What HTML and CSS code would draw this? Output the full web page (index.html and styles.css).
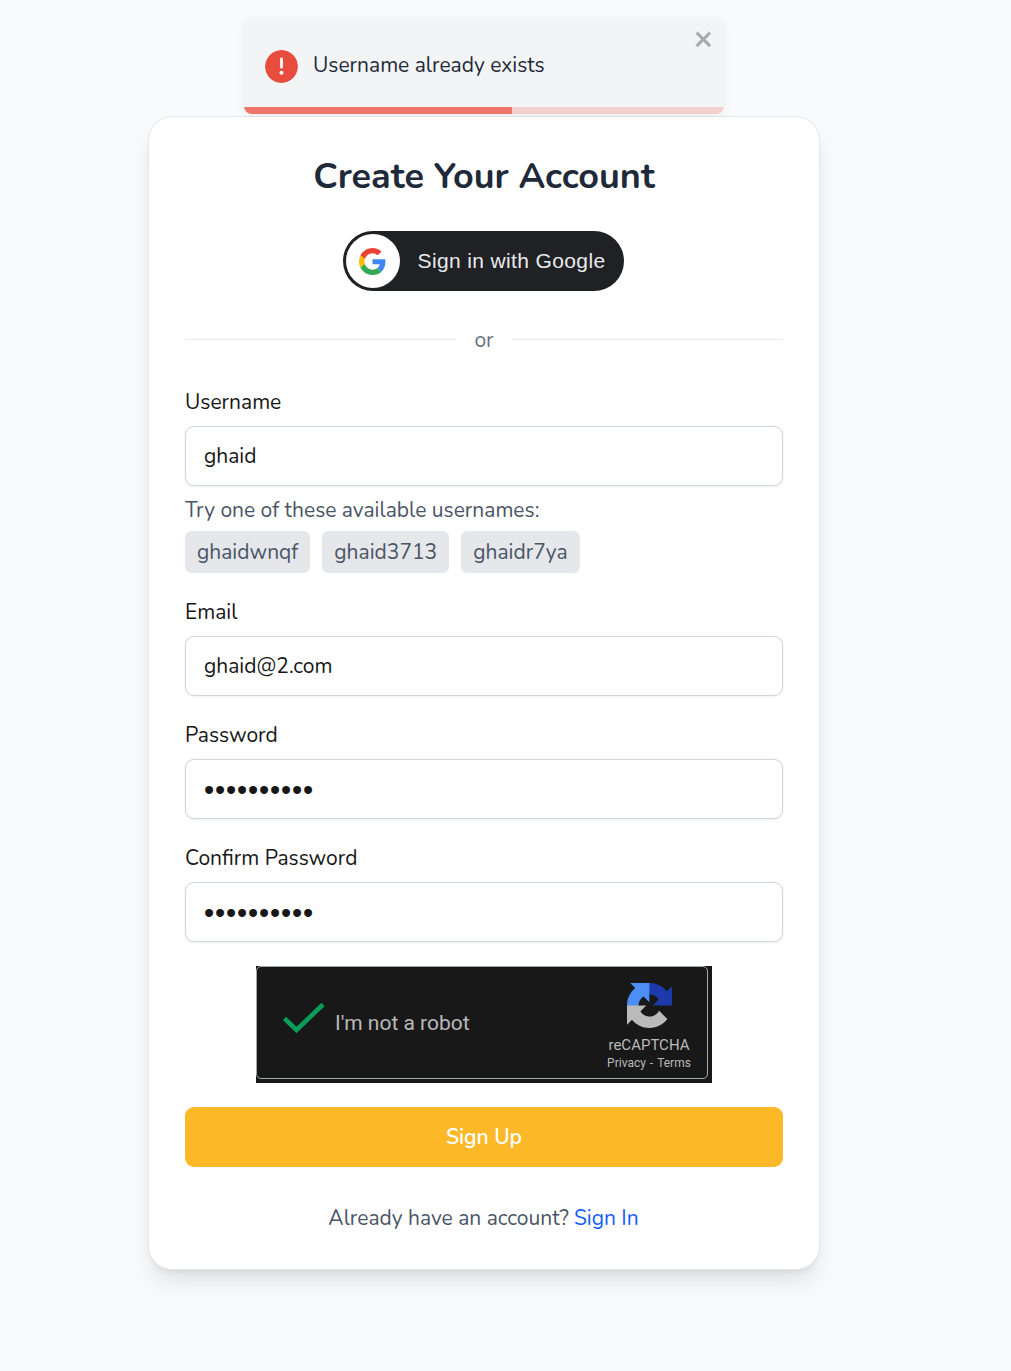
FILE: index.html
```html
<!DOCTYPE html>
<html lang="en">
<head>
<meta charset="utf-8">
<title>Create Your Account</title>
<link rel="stylesheet" href="styles.css">
</head>
<body>
<div class="toast" role="alert">
  <svg class="toast-icon" viewBox="0 0 24 24"><path fill="#e74c3c" d="M11.983 0a12.206 12.206 0 00-8.51 3.653A11.8 11.8 0 000 12.207 11.779 11.779 0 0011.8 24h.214A12.111 12.111 0 0024 11.791 11.766 11.766 0 0011.983 0zM10.5 16.542a1.476 1.476 0 011.449-1.53h.027a1.527 1.527 0 011.523 1.47 1.475 1.475 0 01-1.449 1.53h-.027a1.529 1.529 0 01-1.523-1.47zM11 12.5v-6a1 1 0 012 0v6a1 1 0 11-2 0z"/></svg>
  <span class="toast-text">Username already exists</span>
  <svg class="toast-close" viewBox="0 0 14 16"><path fill="currentColor" fill-rule="evenodd" d="M7.71 8.23l3.75 3.75-1.48 1.48-3.75-3.75-3.75 3.75L1 11.98l3.75-3.75L1 4.48 2.48 3l3.75 3.75L9.98 3l1.48 1.48-3.75 3.75z"/></svg>
  <div class="toast-track"><div class="toast-progress" style="width: 55.8%"></div></div>
</div>
<main class="page">
  <form class="card">
    <h1 class="title">Create Your Account</h1>
    <button type="button" class="google">
      <span class="google-badge">
        <svg class="google-logo" viewBox="0 0 48 48"><path fill="#EA4335" d="M24 9.5c3.54 0 6.71 1.22 9.21 3.6l6.85-6.85C35.9 2.38 30.47 0 24 0 14.62 0 6.51 5.38 2.56 13.22l7.98 6.19C12.43 13.72 17.74 9.5 24 9.5z"/><path fill="#4285F4" d="M46.98 24.55c0-1.57-.15-3.09-.38-4.55H24v9.02h12.94c-.58 2.96-2.26 5.48-4.78 7.18l7.73 6c4.51-4.18 7.09-10.36 7.09-17.65z"/><path fill="#FBBC05" d="M10.53 28.59c-.48-1.45-.76-2.99-.76-4.59s.27-3.14.76-4.59l-7.98-6.19C.92 16.46 0 20.12 0 24c0 3.88.92 7.54 2.56 10.78l7.97-6.19z"/><path fill="#34A853" d="M24 48c6.48 0 11.93-2.13 15.89-5.81l-7.73-6c-2.15 1.45-4.92 2.3-8.16 2.3-6.26 0-11.57-4.22-13.47-9.91l-7.98 6.19C6.51 42.62 14.62 48 24 48z"/></svg>
      </span>
      <span class="google-text">Sign in with Google</span>
    </button>
    <div class="divider"><span class="or">or</span></div>

    <div class="field">
      <label class="label" for="user">Username</label>
      <input class="input" id="user" value="ghaid">
      <p class="hint">Try one of these available usernames:</p>
      <div class="chips">
        <span class="chip">ghaidwnqf</span>
        <span class="chip">ghaid3713</span>
        <span class="chip">ghaidr7ya</span>
      </div>
    </div>
    <div class="field">
      <label class="label" for="email">Email</label>
      <input class="input" id="email" value="ghaid@2.com">
    </div>
    <div class="field">
      <label class="label" for="pass">Password</label>
      <input class="input secret" id="pass" type="password" value="abcdefghij">
    </div>
    <div class="field">
      <label class="label" for="confirm">Confirm Password</label>
      <input class="input secret" id="confirm" type="password" value="abcdefghij">
    </div>

    <div class="captcha">
      <div class="captcha-box">
        <svg class="tick" viewBox="0 0 42 32"><path d="M1.5 16.5 L13.5 28 L40 2.5" fill="none" stroke="#0a9d58" stroke-width="4.6"/></svg>
        <span class="captcha-text">I'm not a robot</span>
        <div class="captcha-brand">
          <svg class="captcha-logo" viewBox="0 0 64 64"><path fill="#1c3aa9" d="M64 31.955l-.033-1.37V4.687l-7.16 7.16C50.948 4.674 42.033.093 32.05.093c-10.4 0-19.622 4.96-25.458 12.64l11.736 11.86a15.55 15.55 0 0 1 4.754-5.334c2.05-1.6 4.952-2.906 8.968-2.906.485 0 .86.057 1.135.163 4.976.393 9.288 3.14 11.828 7.124l-8.307 8.307L64 31.953"/><path fill="#4c8df6" d="M31.862.094l-1.37.033H4.594l7.16 7.16C4.58 13.147 0 22.06 0 32.046c0 10.4 4.96 19.622 12.64 25.458L24.5 45.768a15.55 15.55 0 0 1-5.334-4.754c-1.6-2.05-2.906-4.952-2.906-8.968 0-.485.057-.86.163-1.135.393-4.976 3.14-9.288 7.124-11.828l8.307 8.307L31.86.095"/><path fill="#bababa" d="M.001 32.045l.033 1.37v25.898l7.16-7.16c5.86 7.173 14.774 11.754 24.76 11.754 10.4 0 19.622-4.96 25.458-12.64l-11.736-11.86a15.55 15.55 0 0 1-4.754 5.334c-2.05 1.6-4.952 2.906-8.968 2.906-.485 0-.86-.057-1.135-.163-4.976-.393-9.288-3.14-11.828-7.124l8.307-8.307c-10.522.04-22.4.066-27.295-.005"/></svg>
          <span class="brand-name">reCAPTCHA</span>
          <span class="brand-links">Privacy&nbsp;-&nbsp;Terms</span>
        </div>
      </div>
    </div>

    <button type="button" class="submit">Sign Up</button>
    <p class="footer">Already have an account?<a class="signin">Sign In</a></p>
  </form>
</main>
</body>
</html>
```
FILE: styles.css
```css
* { box-sizing: border-box; margin: 0; }

body {
  background: #f9fafc;
  font-family: Nunito, Lato, "Noto Sans", sans-serif;
  font-size: 21px;
  line-height: 30px;
  color: #171717;
}

.page { padding: 116px 0 101px 148px; }

.card {
  display: flex;
  flex-direction: column;
  width: 672px;
  height: 1154px;
  padding: 36px;
  background: #fff;
  border: 1px solid #e5e7eb;
  border-radius: 24px;
  box-shadow: 0 15px 23px -4px rgba(0, 0, 0, .1), 0 6px 9px -6px rgba(0, 0, 0, .1);
}

.title {
  height: 45px;
  line-height: 47px;
  font-size: 36px;
  font-weight: 700;
  text-align: center;
  white-space: nowrap;
  color: #1e2939;
}

.google {
  display: flex;
  align-items: center;
  align-self: center;
  gap: 18px;
  width: 281px;
  height: 60px;
  margin-top: 33px;
  margin-right: 2px;
  padding: 3px;
  border: 0;
  border-radius: 30px;
  background: #202124;
  color: #e8eaed;
}
.google-badge {
  display: flex;
  align-items: center;
  justify-content: center;
  width: 54px;
  height: 54px;
  border-radius: 50%;
  background: #fff;
}
.google-logo { width: 27px; height: 27px; }
.google-text {
  font: 21px/30px "Liberation Sans", Arial, sans-serif;
  letter-spacing: .37px;
  white-space: nowrap;
}

.divider {
  display: flex;
  align-items: center;
  gap: 18px;
  height: 30px;
  margin-top: 33px;
  color: #6a7282;
}
.divider::before,
.divider::after { content: ""; flex: 1; height: 1px; background: #e5e7eb; }
.or { padding-top: 2px; }

.field { margin-top: 24px; }
.divider + .field { margin-top: 33px; }
.label { display: block; margin-bottom: 9px; }
.input {
  display: block;
  width: 598px;
  height: 60px;
  padding: 0 18px;
  border: 1px solid #d1d5dc;
  border-radius: 9px;
  background: #fff;
  box-shadow: 0 1px 3px rgba(0, 0, 0, .07);
  font: inherit;
  color: #171717;
}
.secret {
  padding-top: 2px;
  font-family: "Liberation Sans", sans-serif;
  font-size: 29px;
  letter-spacing: .85px;
}

.hint { margin-top: 9px; color: #4a5565; }
.chips { display: flex; gap: 12px; margin-top: 6px; color: #4a5565; }
.chip {
  height: 42px;
  padding: 6px 12px;
  border-radius: 6px;
  background: #e5e7eb;
  white-space: nowrap;
}

.captcha {
  align-self: center;
  width: 456px;
  height: 117px;
  margin-top: 24px;
  background: #181818;
}
.captcha-box {
  display: flex;
  align-items: center;
  width: 452px;
  height: 113px;
  padding-left: 26px;
  border: 1px solid #a4aaa8;
  border-radius: 5px;
  font-family: Roboto, sans-serif;
  color: #bababa;
}
.tick { width: 42px; height: 32px; margin-bottom: 9px; }
.captcha-text { margin-left: 10px; white-space: nowrap; }
.captcha-brand {
  display: flex;
  flex-direction: column;
  align-items: center;
  width: 92px;
  margin-left: auto;
  margin-right: 12px;
  padding-top: 9px;
}
.captcha-logo { width: 45px; height: 45px; }
.brand-name { margin-top: 7px; font-size: 15px; line-height: 20px; }
.brand-links { font-size: 12px; line-height: 16px; word-spacing: 1px; white-space: nowrap; }

.submit {
  height: 60px;
  margin-top: 24px;
  border: 0;
  border-radius: 9px;
  background: #fcb827;
  font: inherit;
  font-weight: 600;
  color: #fff;
}

.footer {
  display: flex;
  justify-content: center;
  gap: 5px;
  margin-top: 36px;
  padding-right: 1px;
  white-space: nowrap;
  color: #4a5565;
}
.signin { color: #155dfc; }

.toast {
  position: absolute;
  top: 18px;
  left: 244px;
  display: flex;
  align-items: center;
  width: 480px;
  height: 96px;
  padding: 0 21px 1px;
  overflow: hidden;
  border-radius: 13px 13px 8px 8px;
  background: #f3f4f6;
  box-shadow: 0 2px 10px rgba(0, 0, 0, .05);
  color: #1e2939;
}
.toast-icon {
  width: 33px;
  height: 33px;
  margin-top: 1px;
  border-radius: 50%;
  background: radial-gradient(#fff 50%, transparent 51%);
}
.toast-text { margin: 0 0 2px 15px; }
.toast-close {
  position: absolute;
  top: 9px;
  right: 9px;
  width: 21px;
  height: 24px;
  color: #a9aaac;
}
.toast-track {
  position: absolute;
  inset: auto 0 0;
  height: 7px;
  background: #f1d0cf;
}
.toast-progress { height: 7px; background: #ed7669; }
```
